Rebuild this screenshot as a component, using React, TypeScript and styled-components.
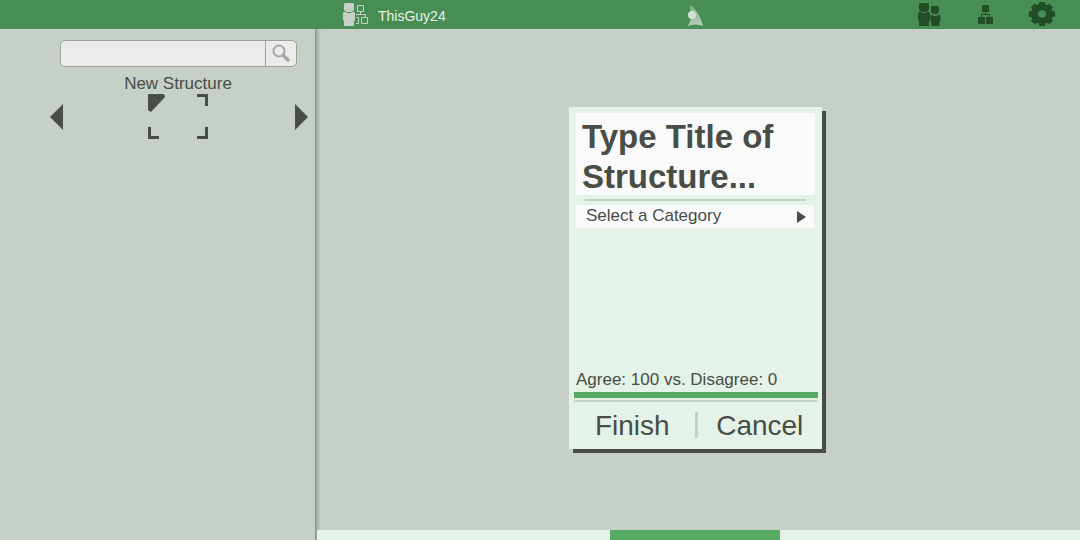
import React from 'react';
import styled, { createGlobalStyle } from 'styled-components';

const ink = '#484d46';
const sage = '#c6d0c7';
const mint = '#e4f2e7';
const leaf = '#58ab65';
const forest = '#214e25';

const GlobalStyle = createGlobalStyle`
  * { box-sizing: border-box; }
  body { margin: 0; background: ${sage}; color: ${ink}; font-family: Arial, "Liberation Sans", sans-serif; }
  button, input, select, textarea { font: inherit; color: inherit; margin: 0; }
  button { background: none; border: 0; padding: 0; cursor: pointer; }
  svg { display: block; }
`;

const Page = styled.div`
  min-height: 100vh;
  display: flex;
  flex-direction: column;
`;

const Header = styled.header`
  height: 29px;
  background: #488d53;
  display: grid;
  grid-template-columns: 1fr auto 1fr;
  padding-left: 315px;
  padding-right: 4px;
`;

const User = styled.a`
  display: flex;
  align-items: flex-start;
  gap: 10px;
  padding: 2px 0 0 28px;
  color: #e9f3ea;
  font-size: 14px;
  line-height: 28px;
  text-decoration: none;
`;

const HomeLink = styled.a`
  padding-top: 5px;
`;

const Tools = styled.nav`
  display: flex;
  justify-content: flex-end;
  align-items: flex-start;
  gap: 36px;
  padding: 2px 21px 0 0;
  color: ${forest};
`;

const Body = styled.div`
  flex: 1;
  display: flex;
`;

const Sidebar = styled.aside`
  width: 315px;
  flex: none;
  padding: 11px 7px 0 48px;
`;

const Search = styled.form`
  display: flex;
  height: 27px;
  margin: 0 11px 0 12px;
  border: 1px solid #9ba49c;
  border-radius: 5px;
  background: #ebebeb;
  overflow: hidden;
`;

const SearchInput = styled.input`
  flex: 1;
  min-width: 0;
  border: 0;
  padding: 0 8px;
  background: transparent;
  outline: none;
  font-size: 14px;
`;

const SearchButton = styled.button`
  width: 31px;
  border-left: 1px solid #9ba49c;
  display: grid;
  place-items: center;
`;

const PickerTitle = styled.h2`
  margin: 7px 0 0;
  font-size: 17px;
  line-height: 20px;
  font-weight: 400;
  text-align: center;
`;

const Picker = styled.div`
  display: flex;
  justify-content: space-between;
  align-items: center;
`;

const Main = styled.main`
  flex: 1;
  display: flex;
  flex-direction: column;
  justify-content: space-between;
  align-items: center;
  gap: 40px;
  padding-top: 78px;
  background: linear-gradient(to right, #86908a, #a3ada6 2px, #bcc6be 4px, ${sage} 6px);
`;

const Card = styled.form`
  width: 253px;
  height: 342px;
  margin-right: 4px;
  padding: 6px 4px 0 5px;
  background: ${mint};
  box-shadow: 4px 4px 0 ${ink};
  display: flex;
  flex-direction: column;
`;

const TitleBox = styled.textarea`
  display: block;
  width: 239px;
  height: 82px;
  margin-left: 2px;
  padding: 4px 0 0 6px;
  border: 0;
  outline: none;
  resize: none;
  overflow: hidden;
  background: #fafafa;
  font-size: 33px;
  line-height: 40px;
  font-weight: 700;
  &::placeholder { color: ${ink}; opacity: 1; }
`;

const Rule = styled.hr<{ $inset?: boolean }>`
  width: ${p => (p.$inset ? '221px' : '100%')};
  height: 2px;
  margin: ${p => (p.$inset ? '4px 0 4px 11px' : '2px 0 0')};
  border: 0;
  flex: none;
  background: #c4d2c7;
`;

const Category = styled.label`
  display: flex;
  align-items: center;
  width: 238px;
  height: 23px;
  margin-left: 2px;
  padding: 0 8px 0 10px;
  background: #fafafa;
`;

const CategorySelect = styled.select`
  flex: 1;
  min-width: 0;
  height: 23px;
  padding: 0 0 2px;
  border: 0;
  outline: none;
  appearance: none;
  background: transparent;
  font-size: 17px;
  line-height: 20px;
`;

const Votes = styled.p`
  margin: auto 0 2px 2px;
  font-size: 17px;
  line-height: 20px;
`;

const VoteBar = styled.div`
  height: 6px;
  background: ${leaf};
`;

const Actions = styled.div`
  display: flex;
  align-items: center;
  height: 47px;
  padding-bottom: 2px;
`;

const Action = styled.button`
  flex: 1;
  padding-top: 2px;
  font-size: 28px;
  line-height: 32px;
  text-align: center;
`;

const Divider = styled.span`
  width: 3px;
  height: 26px;
  margin: 0 4px;
  background: #c1d1c5;
`;

const Track = styled.div`
  align-self: stretch;
  height: 10px;
  margin-left: 2px;
  padding-right: 7px;
  background: ${mint};
  display: flex;
  justify-content: center;
`;

const Thumb = styled.div`
  width: 170px;
  background: ${leaf};
`;

const UserIcon = () => (
  <svg width="25" height="25" viewBox="0 0 25 25" fill="#c6d0c7" aria-hidden="true">
    <path d="M2 1h8l1 1v6l-1 1-1 1H3L1 8V2z" />
    <path d="M0 11l1-1h2l1 1h4l1-1h2l1 1v7l-1 1v5H1v-5l-1-1z" />
    <path d="M14.500 3.500h6v6h-6zM17.500 9.500v3M13 12.500h9.500v3M18.500 15.500h6v6h-6zM13.500 15.500h2v6H13" fill="none" stroke="#c6d0c7" />
  </svg>
);

const HomeIcon = () => (
  <svg width="17" height="21" viewBox="0 0 17 21" aria-hidden="true">
    <defs>
      <linearGradient id="sail" x1="0" y1="0" x2="0" y2="1">
        <stop offset="0" stopColor="#86b18d" />
        <stop offset="1" stopColor="#b4ccb8" />
      </linearGradient>
    </defs>
    <path d="M3 0C9 4 14 12 16 21Q8 18 1 21L4 14z" fill="url(#sail)" />
    <circle cx="5" cy="10" r="4" fill="#d3e2d5" />
  </svg>
);

const PeopleIcon = () => (
  <svg width="24" height="24" viewBox="0 0 24 24" fill="currentColor" aria-hidden="true">
    <path d="M2 1h8l1 1v6l-2 2H3L1 8V2z" />
    <path d="M0 11l1-1h2l1 1h4l1-1h2l1 1v7l-1 1v5H1v-5l-1-1z" />
    <path d="M14 4h6l1 1v5l-2 2h-4l-2-2V5z" />
    <path d="M12.500 13h2l1 1h3l1-1h2l1 1v5l-1 1v4h-8v-4l-1-1z" />
  </svg>
);

const TreeIcon = () => (
  <svg width="15" height="22" viewBox="0 0 15 22" fill="currentColor" aria-hidden="true">
    <path d="M4 3h7v7H4zM0 15h7v7H0zM8 15h7v7H8zM7 10h1v2h4v3h-1v-2H4v2H3v-3h4z" />
  </svg>
);

const GearIcon = () => (
  <svg width="26" height="24" viewBox="-13 -13 26 26" preserveAspectRatio="none" aria-hidden="true">
    <circle r="7.500" fill="none" stroke="currentColor" strokeWidth="7" />
    {[0, 45, 90, 135, 180, 225, 270, 315].map(angle => (
      <rect key={angle} x="-3" y="-13" width="6" height="4" fill="currentColor" transform={`rotate(${angle})`} />
    ))}
  </svg>
);

const SearchIcon = () => (
  <svg width="18" height="19" viewBox="0 0 18 19" fill="none" stroke="#a0a8a1" aria-hidden="true">
    <circle cx="7" cy="7" r="5.500" strokeWidth="2" />
    <path d="M11 11l5 5" strokeWidth="3.500" strokeLinecap="round" />
  </svg>
);

const FrameIcon = () => (
  <svg width="60" height="45" viewBox="0 0 60 45" fill={ink} aria-hidden="true">
    <path d="M0 0h16l1 3L3 18l-3-2zM49 0h11v12h-3V3h-8zM0 33h3v9h8v3H0zM57 33h3v12H49v-3h8z" />
  </svg>
);

const Arrow = ({ left = false }: { left?: boolean }) => (
  <svg width="15" height="28" viewBox="0 0 15 28" fill={ink} aria-hidden="true">
    <path d={left ? 'M15 1v26L2 14z' : 'M2 1v26l13-13z'} />
  </svg>
);

export default function App() {
  return (
    <Page>
      <GlobalStyle />
      <Header>
        <User href="#profile"><UserIcon />ThisGuy24</User>
        <HomeLink href="#home" aria-label="Home"><HomeIcon /></HomeLink>
        <Tools>
          <button type="button" aria-label="People"><PeopleIcon /></button>
          <button type="button" aria-label="Structures"><TreeIcon /></button>
          <button type="button" aria-label="Settings"><GearIcon /></button>
        </Tools>
      </Header>
      <Body>
        <Sidebar>
          <Search onSubmit={e => e.preventDefault()}>
            <SearchInput type="text" aria-label="Search structures" />
            <SearchButton aria-label="Search"><SearchIcon /></SearchButton>
          </Search>
          <PickerTitle>New Structure</PickerTitle>
          <Picker>
            <button type="button" aria-label="Previous"><Arrow left /></button>
            <button type="button" aria-label="New structure"><FrameIcon /></button>
            <button type="button" aria-label="Next"><Arrow /></button>
          </Picker>
        </Sidebar>
        <Main>
          <Card onSubmit={e => e.preventDefault()}>
            <TitleBox aria-label="Title" placeholder="Type Title of Structure..." />
            <Rule $inset />
            <Category>
              <CategorySelect aria-label="Category">
                <option>Select a Category</option>
              </CategorySelect>
              <svg width="9" height="12" viewBox="0 0 9 12" fill={ink} aria-hidden="true">
                <path d="M0 0l9 6-9 6z" />
              </svg>
            </Category>
            <Votes>Agree: 100 vs. Disagree: 0</Votes>
            <VoteBar />
            <Rule />
            <Actions>
              <Action type="submit">Finish</Action>
              <Divider />
              <Action type="button">Cancel</Action>
            </Actions>
          </Card>
          <Track><Thumb /></Track>
        </Main>
      </Body>
    </Page>
  );
}
